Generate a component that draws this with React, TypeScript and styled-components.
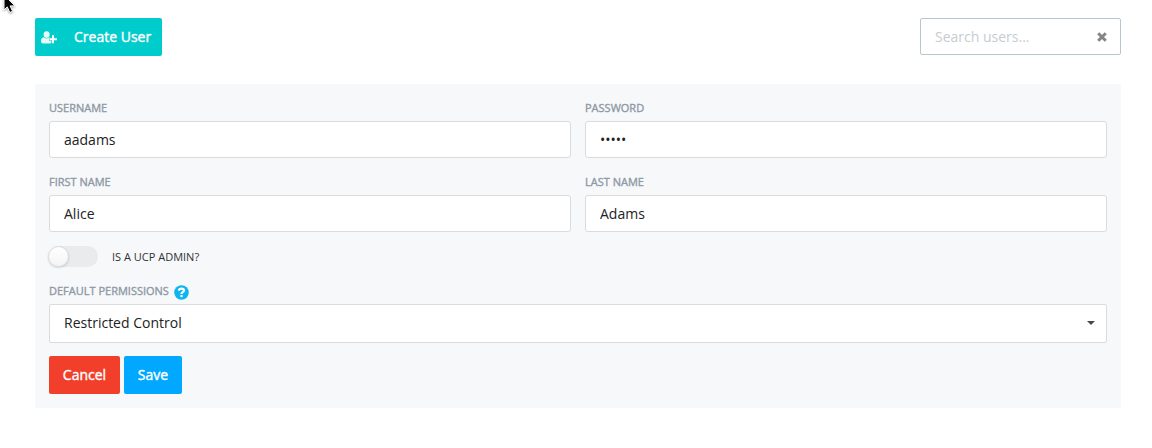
import React, { useState } from 'react';
import styled, { createGlobalStyle } from 'styled-components';

const GlobalStyle = createGlobalStyle`
  *, *::before, *::after { box-sizing: border-box; }
  body {
    margin: 0;
    background: #fff;
    color: rgba(0, 0, 0, 0.87);
    font-family: "Open Sans", "Noto Sans", sans-serif;
    font-size: 14px;
  }
  input, button { font: inherit; }
`;

const Page = styled.main`
  position: relative;
  height: 448px;
  padding: 18px 31px 0 35px;
  overflow: hidden;
`;

const Toolbar = styled.header`
  display: flex;
  justify-content: space-between;
  align-items: flex-start;
  height: 66px;
`;

const Button = styled.button<{ $bg: string; $width: number }>`
  display: flex;
  align-items: center;
  justify-content: center;
  width: ${(p) => p.$width}px;
  height: 38px;
  padding: 0;
  border: 0;
  border-radius: 2px;
  background: ${(p) => p.$bg};
  color: #fff;
  line-height: 14px;
  -webkit-text-stroke: 0.4px #fff;
`;

const CreateButton = styled(Button)`
  justify-content: flex-start;
  padding-left: 6px;
`;

const UserPlusIcon = styled.svg`
  width: 17px;
  height: 13px;
  margin-right: 16px;
  fill: #fff;
`;

const SearchBox = styled.div`
  display: flex;
  align-items: center;
  width: 201px;
  height: 37px;
  padding: 0 13px 0 14px;
  border: 1px solid #b9c6cd;
  border-radius: 2px;
`;

const SearchInput = styled.input`
  flex: 1;
  min-width: 0;
  padding: 0;
  border: 0;
  outline: 0;
  background: transparent;
  &::placeholder { color: #c5cdd1; opacity: 1; }
`;

const ClearIcon = styled.svg`
  width: 10px;
  height: 10px;
  stroke: #858585;
  stroke-width: 3;
`;

const Panel = styled.form`
  display: flex;
  flex-direction: column;
  height: 324px;
  padding: 14px;
  border-radius: 2px;
  background: #f7f8fa;
`;

const FieldRow = styled.div`
  display: grid;
  grid-template-columns: 1fr 1fr;
  gap: 14px;
  height: 74px;
`;

const Field = styled.div`
  display: flex;
  flex-direction: column;
`;

const Label = styled.label`
  display: flex;
  align-items: center;
  height: 20px;
  margin-bottom: 3px;
  color: #8e99a5;
  font-size: 11px;
  line-height: 20px;
  text-transform: uppercase;
  -webkit-text-stroke: 0.35px #8e99a5;
`;

const TextInput = styled.input`
  width: 100%;
  height: 37px;
  padding: 0 14px;
  border: 1px solid #d9dbdd;
  border-radius: 3px;
  outline: 0;
  background: #fff;
  color: #222;
`;

const ToggleRow = styled.label`
  display: flex;
  align-items: center;
  height: 21px;
  color: #303234;
  font-size: 11px;
  text-transform: uppercase;
`;

const Track = styled.span<{ $on: boolean }>`
  display: flex;
  justify-content: ${(p) => (p.$on ? 'flex-end' : 'flex-start')};
  width: 49px;
  height: 21px;
  margin-right: 14px;
  border-radius: 11px;
  background: ${(p) => (p.$on ? '#00a8ff' : '#eaebed')};
`;

const Knob = styled.span`
  width: 21px;
  height: 21px;
  margin-left: -1px;
  border: 1px solid #d8d9db;
  border-radius: 50%;
  background: linear-gradient(#fff, #f4f4f4);
  box-shadow: 0 1px 2px rgba(0, 0, 0, 0.15);
`;

const HiddenCheckbox = styled.input`
  display: none;
`;

const Permissions = styled(Field)`
  margin-top: 14px;
`;

const HelpIcon = styled.svg`
  width: 15px;
  height: 15px;
  margin: 2px 0 0 5px;
`;

const Select = styled.div`
  display: flex;
  align-items: center;
  justify-content: space-between;
  height: 39px;
  padding: 0 11px 2px 14px;
  border: 1px solid #d9dbdd;
  border-radius: 2px;
  background: #fff;
  color: #222;
`;

const Caret = styled.span`
  border: 4px solid transparent;
  border-top-color: #484848;
  border-bottom: 0;
`;

const Actions = styled.div`
  display: flex;
  gap: 4px;
  margin-top: 13px;
`;

const Pointer = styled.svg`
  position: absolute;
  left: 3px;
  top: -6px;
  width: 13px;
  height: 20px;
  filter: drop-shadow(0 1px 1px rgba(0, 0, 0, 0.35));
`;

type TextFieldProps = { id: string; label: string; value: string; type?: string };

function TextField({ id, label, value, type = 'text' }: TextFieldProps) {
  return (
    <Field>
      <Label htmlFor={id}>{label}</Label>
      <TextInput id={id} type={type} defaultValue={value} />
    </Field>
  );
}

export default function App() {
  const [admin, setAdmin] = useState(false);
  return (
    <Page>
      <GlobalStyle />
      <Pointer viewBox="0 0 13 20">
        <path d="M1 1v15l3.300-3.100 2.500 5.600 2.800-1.200-2.500-5.400H12z" fill="#000" stroke="#fff" />
      </Pointer>
      <Toolbar>
        <CreateButton type="button" $bg="#00cccb" $width={127}>
          <UserPlusIcon viewBox="0 0 17 13">
            <ellipse cx="5.6" cy="3.6" rx="3" ry="3.3" opacity="0.9" />
            <path opacity="0.9" d="M2.700 6.300C.7 6.600 0 8.300 0 10.300 0 11.600.8 12.400 2 12.400h7.300c.4 0 .7-.1 1-.3V9.700H8V6.900h1.300c-.2-.3-.5-.5-.8-.6-1.500 1.500-4.300 1.500-5.800 0z" />
            <path d="M11 4.300h2v3h3v2h-3v3h-2v-3H8.500v-2H11z" />
          </UserPlusIcon>
          Create User
        </CreateButton>
        <SearchBox>
          <SearchInput placeholder="Search users..." aria-label="Search users" />
          <ClearIcon viewBox="0 0 10 10">
            <path d="M1.200 1.200l7.600 7.600M8.800 1.200L1.200 8.800" />
          </ClearIcon>
        </SearchBox>
      </Toolbar>
      <Panel>
        <FieldRow>
          <TextField id="username" label="Username" value="aadams" />
          <TextField id="password" label="Password" value="adams" type="password" />
        </FieldRow>
        <FieldRow>
          <TextField id="first" label="First Name" value="Alice" />
          <TextField id="last" label="Last Name" value="Adams" />
        </FieldRow>
        <ToggleRow>
          <HiddenCheckbox type="checkbox" checked={admin} onChange={() => setAdmin(!admin)} />
          <Track $on={admin}><Knob /></Track>
          Is a UCP Admin?
        </ToggleRow>
        <Permissions>
          <Label as="div">
            Default Permissions
            <HelpIcon viewBox="0 0 14 14">
              <circle cx="7" cy="7" r="6.8" fill="#0fb5ee" />
              <path d="M4.500 5.300C4.700 4 5.600 3.300 7 3.300s2.300.7 2.300 1.800C9.300 6.500 7 6.500 7 8.400" fill="none" stroke="#fff" strokeWidth="2.1" />
              <path d="M6 9.300h2v2H6z" fill="#fff" />
            </HelpIcon>
          </Label>
          <Select role="combobox" aria-expanded="false">
            Restricted Control
            <Caret />
          </Select>
        </Permissions>
        <Actions>
          <Button type="button" $bg="#f23f2c" $width={71}>Cancel</Button>
          <Button type="button" $bg="#00a8ff" $width={58}>Save</Button>
        </Actions>
      </Panel>
    </Page>
  );
}
